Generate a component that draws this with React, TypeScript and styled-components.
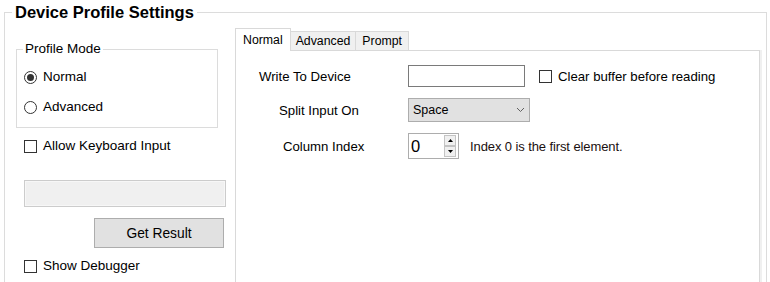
import React from 'react';
import styled, { createGlobalStyle } from 'styled-components';

const GlobalStyle = createGlobalStyle`
  html, body {
    margin: 0;
    padding: 0;
    background: #ffffff;
    overflow: hidden;
  }
  body {
    font-family: 'Liberation Sans', Arial, sans-serif;
    font-size: 13.5px;
    color: #000000;
  }
`;

const Page = styled.div`
  width: 770px;
  height: 282px;
  overflow: hidden;
`;

const OuterGroup = styled.fieldset`
  margin: 3px 0 0 4px;
  padding: 0;
  width: 763px;
  height: 300px;
  box-sizing: border-box;
  border: 1px solid #dcdcdc;
  min-inline-size: 0;
`;

const Title = styled.legend`
  margin-left: 7px;
  padding: 0 3px;
  font-size: 16.5px;
  line-height: 19px;
  font-weight: bold;
`;

const Body = styled.div`
  display: grid;
  grid-template-columns: 230px 525px;
  align-items: start;
`;

const LeftColumn = styled.div`
  display: flex;
  flex-direction: column;
  align-items: flex-start;
  padding-left: 11px;
`;

const ModeGroup = styled.fieldset`
  margin: 19px 0 0 0;
  padding: 5px 0 5px 7px;
  width: 202px;
  box-sizing: border-box;
  border: 1px solid #dcdcdc;
  min-inline-size: 0;
`;

const GroupLabel = styled.legend`
  margin-left: -1px;
  padding: 0 2px;
  font-size: 13.5px;
  line-height: 16px;
`;

const OptionRow = styled.label<{ $height?: number; $top?: number }>`
  display: flex;
  align-items: center;
  gap: 6px;
  height: ${(p) => p.$height ?? 30}px;
  margin-top: ${(p) => p.$top ?? 0}px;
  line-height: 16px;
  white-space: nowrap;
`;

const CheckRow = styled(OptionRow)`
  margin-left: 8px;
`;

const RadioDot = styled.span<{ $checked?: boolean }>`
  position: relative;
  width: 13px;
  height: 13px;
  box-sizing: border-box;
  border: 1px solid #333333;
  border-radius: 50%;
  background: #ffffff;
  flex: none;

  &::after {
    content: '';
    display: ${(p) => (p.$checked ? 'block' : 'none')};
    position: absolute;
    left: 2px;
    top: 2px;
    width: 7px;
    height: 7px;
    border-radius: 50%;
    background: #333333;
  }
`;

const CheckBox = styled.span`
  width: 13px;
  height: 13px;
  box-sizing: border-box;
  border: 1px solid #333333;
  background: #ffffff;
  flex: none;
`;

const ResultBox = styled.div`
  margin: 24px 0 0 8px;
  width: 202px;
  height: 27px;
  box-sizing: border-box;
  border: 1px solid #cccccc;
  box-shadow: inset 0 0 0 1px #f7f7f7;
  background: #f0f0f0;
`;

const Button = styled.button`
  margin: 11px 0 0 78px;
  width: 130px;
  height: 30px;
  box-sizing: border-box;
  border: 1px solid #adadad;
  background: #e1e1e1;
  font-family: inherit;
  font-size: 13.8px;
  color: #000000;
  padding: 0;
`;

const TabControl = styled.div`
  margin-top: 6px;
  display: flex;
  flex-direction: column;
`;

const TabStrip = styled.div`
  display: flex;
  align-items: flex-end;
  height: 22px;
`;

const Tab = styled.div<{ $active?: boolean; $pad: number }>`
  position: relative;
  z-index: ${(p) => (p.$active ? 1 : 0)};
  box-sizing: border-box;
  height: ${(p) => (p.$active ? 23 : 19)}px;
  margin-bottom: ${(p) => (p.$active ? -1 : 0)}px;
  margin-left: ${(p) => (p.$active ? 0 : -1)}px;
  padding: 0 ${(p) => p.$pad}px;
  border: 1px solid #d9d9d9;
  border-bottom: none;
  background: ${(p) => (p.$active ? '#ffffff' : '#f0f0f0')};
  font-size: 12.3px;
  line-height: ${(p) => (p.$active ? 22 : 18)}px;
  white-space: nowrap;

  &:first-child {
    margin-left: 0;
  }
`;

const TabPanel = styled.div`
  height: 240px;
  box-sizing: border-box;
  border: 1px solid #d9d9d9;
  box-shadow: 2px 0 0 #f0f0f0;
  padding-top: 14px;
  display: flex;
  flex-direction: column;
  gap: 11px;
`;

const FieldRow = styled.div`
  display: flex;
  align-items: center;
`;

const FieldLabel = styled.span<{ $indent: number }>`
  width: 172px;
  box-sizing: border-box;
  padding-left: ${(p) => p.$indent}px;
  font-size: 13.2px;
  white-space: nowrap;
`;

const TextInput = styled.div`
  width: 117px;
  height: 22px;
  box-sizing: border-box;
  border: 1px solid #7a7a7a;
  background: #ffffff;
`;

const Extra = styled.span<{ $gap: number; $muted?: boolean }>`
  display: flex;
  align-items: center;
  gap: 6px;
  margin-left: ${(p) => p.$gap}px;
  font-size: ${(p) => (p.$muted ? 13 : 13.2)}px;
  color: ${(p) => (p.$muted ? '#1a1010' : '#000000')};
  letter-spacing: ${(p) => (p.$muted ? '-0.1px' : '0')};
  white-space: nowrap;
`;

const Combo = styled.div`
  display: flex;
  align-items: center;
  justify-content: space-between;
  width: 122px;
  height: 24px;
  box-sizing: border-box;
  padding: 0 4px 0 4px;
  border: 1px solid #adadad;
  background: #e1e1e1;
  font-size: 12.5px;
`;

const SpinBox = styled.div`
  display: flex;
  align-items: center;
  justify-content: space-between;
  width: 51px;
  height: 26px;
  box-sizing: border-box;
  padding: 0 2px 0 2px;
  border: 1px solid #adadad;
  background: #ffffff;
  font-size: 16.5px;
`;

const SpinButtons = styled.div`
  display: flex;
  flex-direction: column;
`;

const SpinButton = styled.div`
  display: flex;
  align-items: center;
  justify-content: center;
  width: 12px;
  height: 11px;
  box-sizing: border-box;
  border: 1px solid #c4c4c4;
  background: #f0f0f0;
`;

const Chevron = () => (
  <svg width="9" height="6" viewBox="0 0 9 6">
    <path d="M1 1 L4.5 4.5 L8 1" fill="none" stroke="#606060" strokeWidth="1" />
  </svg>
);

const Arrow = ({ up }: { up?: boolean }) => (
  <svg width="5" height="3" viewBox="0 0 5 3">
    <path d={up ? 'M0 3 L2.5 0 L5 3 Z' : 'M0 0 L2.5 3 L5 0 Z'} fill="#000000" />
  </svg>
);

const App = () => (
  <>
    <GlobalStyle />
    <Page>
      <OuterGroup>
        <Title>Device Profile Settings</Title>
        <Body>
          <LeftColumn>
            <ModeGroup>
              <GroupLabel>Profile Mode</GroupLabel>
              <OptionRow>
                <RadioDot $checked />
                Normal
              </OptionRow>
              <OptionRow>
                <RadioDot />
                Advanced
              </OptionRow>
            </ModeGroup>
            <CheckRow $height={20} $top={8}>
              <CheckBox />
              Allow Keyboard Input
            </CheckRow>
            <ResultBox />
            <Button>Get Result</Button>
            <CheckRow $height={20} $top={8}>
              <CheckBox />
              Show Debugger
            </CheckRow>
          </LeftColumn>
          <TabControl>
            <TabStrip>
              <Tab $active $pad={7}>Normal</Tab>
              <Tab $pad={5}>Advanced</Tab>
              <Tab $pad={6}>Prompt</Tab>
            </TabStrip>
            <TabPanel>
              <FieldRow>
                <FieldLabel $indent={23}>Write To Device</FieldLabel>
                <TextInput />
                <Extra $gap={14}>
                  <CheckBox />
                  Clear buffer before reading
                </Extra>
              </FieldRow>
              <FieldRow>
                <FieldLabel $indent={43}>Split Input On</FieldLabel>
                <Combo>
                  Space
                  <Chevron />
                </Combo>
              </FieldRow>
              <FieldRow>
                <FieldLabel $indent={47}>Column Index</FieldLabel>
                <SpinBox>
                  0
                  <SpinButtons>
                    <SpinButton>
                      <Arrow up />
                    </SpinButton>
                    <SpinButton>
                      <Arrow />
                    </SpinButton>
                  </SpinButtons>
                </SpinBox>
                <Extra $gap={11} $muted>
                  Index 0 is the first element.
                </Extra>
              </FieldRow>
            </TabPanel>
          </TabControl>
        </Body>
      </OuterGroup>
    </Page>
  </>
);

export default App;
